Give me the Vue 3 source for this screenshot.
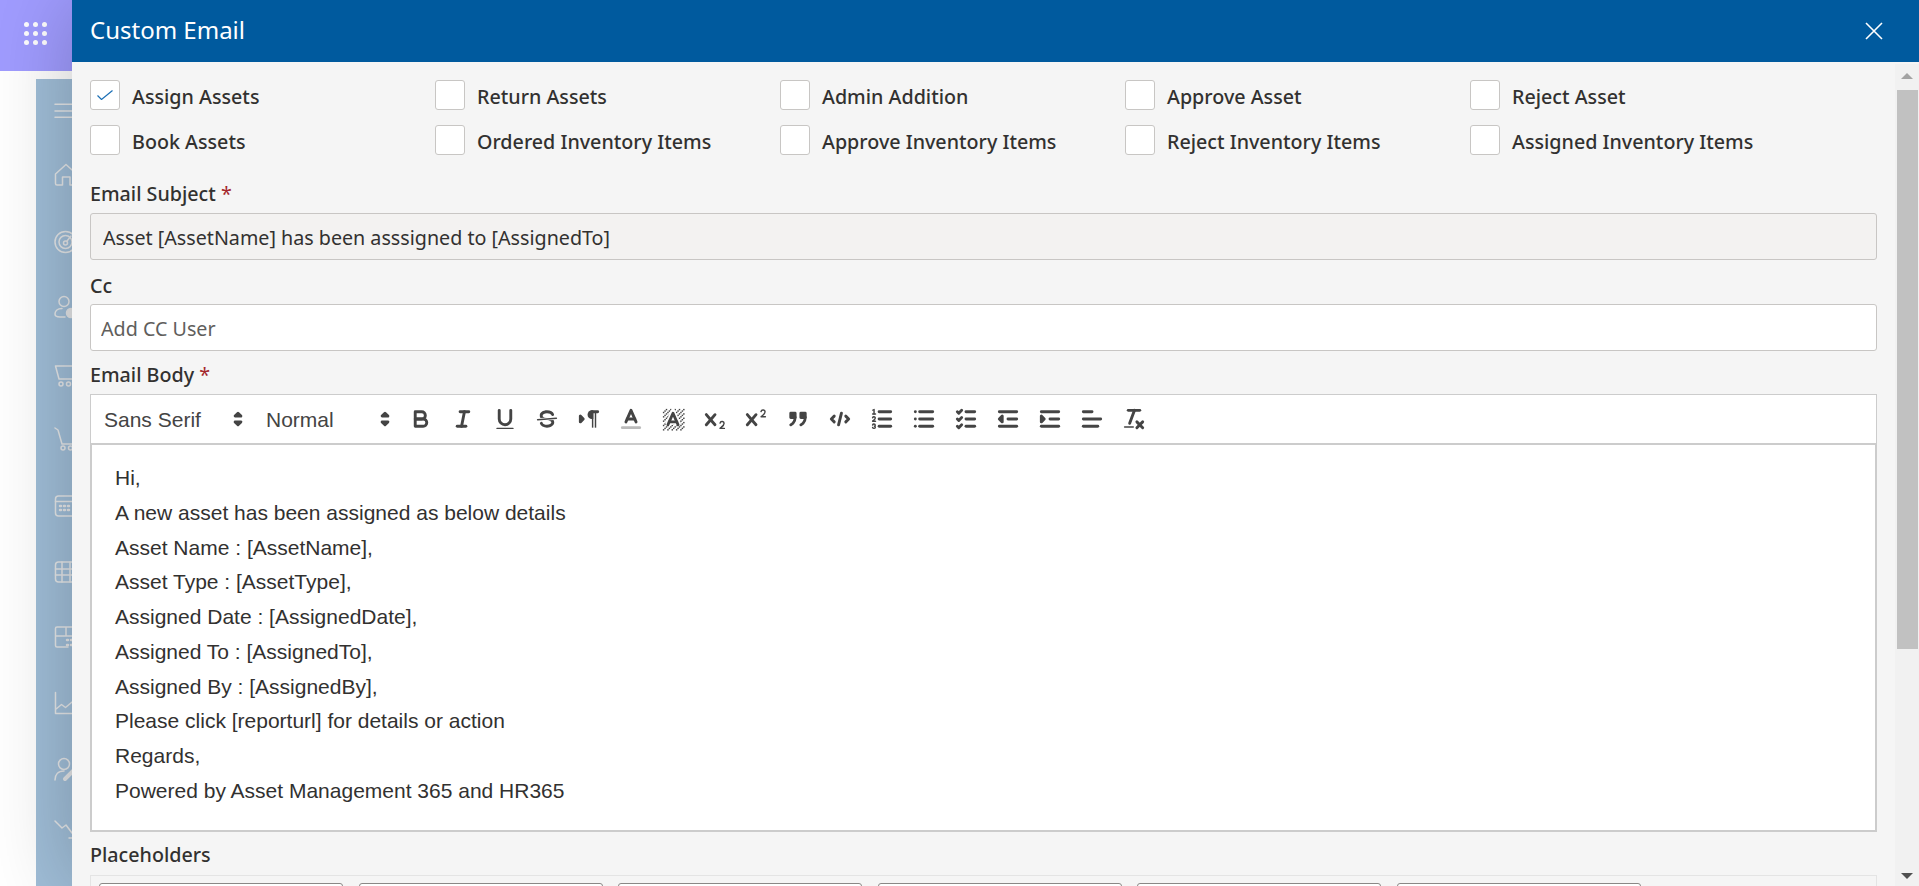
<template>
  <div class="page">
    <div class="tile">
      <div class="dots"><i v-for="n in 9" :key="n"></i></div>
    </div>
    <nav class="sidebar">
      <div class="nav-item">
        <svg viewBox="0 -1.250 24 24"><path d="M1 3h23M1 9.700h23M1 16h23" /></svg>
      </div>
      <div class="nav-item">
        <svg viewBox="0 2 24 24"><path d="M1.500 11 12 1.500 22.500 11v9.500a1.500 1.500 0 0 1-1.500 1.500h-5v-8H8.500v8H3a1.500 1.500 0 0 1-1.500-1.500Z" /></svg>
      </div>
      <div class="nav-item">
        <svg viewBox="0 1 24 24"><circle cx="11.500" cy="12" r="10.500" /><circle cx="11.500" cy="12" r="6.500" /><circle cx="11.500" cy="13" r="2" /><path d="m13 11 4-5" /></svg>
      </div>
      <div class="nav-item">
        <svg viewBox="0 1 24 24"><circle cx="10" cy="6.500" r="5" /><path d="M8 13.500c-5 0-7 3-7 5.500 0 2 2 3 5 3h5" /><circle class="nav-fill" cx="17" cy="18" r="4.500" /></svg>
      </div>
      <div class="nav-item">
        <svg viewBox="0 -2 24 24"><path d="M1.500 2h24l-3 13H5Z" /><circle cx="7" cy="20" r="2" /><circle cx="14.500" cy="20" r="2" /></svg>
      </div>
      <div class="nav-item">
        <svg viewBox="0 0 24 24"><path d="M1 1l3 2 4 14h17" /><circle cx="9" cy="21" r="2" /><circle cx="16.500" cy="21" r="2" /></svg>
      </div>
      <div class="nav-item">
        <svg viewBox="0 -1 24 24"><rect x="1.500" y="2" width="26" height="20" rx="3" /><path d="M1.500 7.500h26" /><path class="nav-dots" d="M6 12h1M10 12h1M14 12h1M6 16h1M10 16h1M14 16h1" /></svg>
      </div>
      <div class="nav-item">
        <svg viewBox="0 -2 24 24"><rect x="1.500" y="2" width="26" height="20" rx="3" /><path d="M1.500 9h26M1.500 15h26M8 2v20M16 2v20" /></svg>
      </div>
      <div class="nav-item">
        <svg viewBox="0 -1 24 24"><path d="M14 22H3a1.500 1.500 0 0 1-1.500-1.500V3.500A1.500 1.500 0 0 1 3 2h23M1.500 11H20M12 2v9" /><path class="nav-dots" d="M13 15h1M17 15h1M13 20h1M17 20h1" /></svg>
      </div>
      <div class="nav-item">
        <svg viewBox="0 -2.500 24 24"><path d="M1.500 1v21H26M1.500 18l6-5 4 3 12-10" /></svg>
      </div>
      <div class="nav-item">
        <svg viewBox="0 -2 24 24"><circle cx="10" cy="7" r="5.500" /><path d="M1 23c0-5 3-9 9-9" /><path class="nav-thick" d="m11 22 12-12" /></svg>
      </div>
      <div class="nav-item">
        <svg viewBox="0 3 24 24"><path d="m1 4 7 7 4-3 6 8M15 21h10" /></svg>
      </div>
    </nav>

    <section class="panel">
      <header class="panel-head">
        <h1>Custom Email</h1>
        <svg class="close" viewBox="0 0 18 18"><path d="M1 1l16 16M17 1 1 17" /></svg>
      </header>
      <div class="panel-body">
        <div class="content">
          <div class="checks">
            <label v-for="item in checks" :key="item" class="check">
              <span class="box">
                <svg v-if="item === 'Assign Assets'" viewBox="0 0 16 10"><path d="M.5 5.500 4.500 9.500 15.500.5" /></svg>
              </span>
              <span class="check-text">{{ item }}</span>
            </label>
          </div>

          <div class="label subject-label">Email Subject <b>*</b></div>
          <input class="input readonly" readonly value="Asset [AssetName] has been asssigned to [AssignedTo]" />

          <div class="label cc-label">Cc</div>
          <input class="input cc" placeholder="Add CC User" />

          <div class="label body-label">Email Body <b>*</b></div>
          <div class="toolbar">
            <div class="picker font">
              <span>Sans Serif</span>
              <svg viewBox="0 0 18 18"><polygon class="st" points="7 11 9 13 11 11 7 11" /><polygon class="st" points="7 7 9 5 11 7 7 7" /></svg>
            </div>
            <div class="picker size">
              <span>Normal</span>
              <svg viewBox="0 0 18 18"><polygon class="st" points="7 11 9 13 11 11 7 11" /><polygon class="st" points="7 7 9 5 11 7 7 7" /></svg>
            </div>
            <button>
              <svg viewBox="0 0 18 18"><path class="st" d="M5,4H9.500A2.500,2.500,0,0,1,12,6.500v0A2.500,2.500,0,0,1,9.500,9H5A0,0,0,0,1,5,9V4A0,0,0,0,1,5,4Z" /><path class="st" d="M5,9h5.500A2.500,2.500,0,0,1,13,11.500v0A2.500,2.500,0,0,1,10.500,14H5a0,0,0,0,1,0,0V9A0,0,0,0,1,5,9Z" /></svg>
            </button>
            <button>
              <svg viewBox="0 0 18 18"><line class="st" x1="7" x2="13" y1="4" y2="4" /><line class="st" x1="5" x2="11" y1="14" y2="14" /><line class="st" x1="8" x2="10" y1="14" y2="4" /></svg>
            </button>
            <button>
              <svg viewBox="0 0 18 18"><path class="st" d="M5,3V9a4.012,4.012,0,0,0,4,4H9a4.012,4.012,0,0,0,4-4V3" /><rect class="fl" height="1" rx="0.500" width="12" x="3" y="15" /></svg>
            </button>
            <button>
              <svg viewBox="0 0 18 18"><line class="th" x1="15.500" x2="2.500" y1="8.500" y2="9.500" /><path class="fl" d="M9.007,8C6.542,7.791,6,7.519,6,6.500,6,5.792,7.283,5,9,5c1.571,0,2.765.679,2.969,1.309a1,1,0,0,0,1.900-.617C13.356,4.106,11.354,3,9,3,6.200,3,4,4.538,4,6.500a3.200,3.200,0,0,0,.5,1.843Z" /><path class="fl" d="M8.984,10C11.457,10.208,12,10.479,12,11.500c0,.708-1.283,1.500-3,1.500-1.571,0-2.765-.679-2.969-1.309a1,1,0,1,0-1.900.617C4.644,13.894,6.646,15,9,15c2.800,0,5-1.538,5-3.500a3.200,3.200,0,0,0-.5-1.843Z" /></svg>
            </button>
            <button>
              <svg viewBox="0 0 18 18"><polygon class="st fl" points="3 11 5 9 3 7 3 11" /><line class="st" x1="15" x2="11" y1="4" y2="4" /><path class="fl" d="M11,3a3,3,0,0,0,0,6h1V3H11Z" /><rect class="fl" height="11" width="1" x="11" y="4" /><rect class="fl" height="11" width="1" x="13" y="4" /></svg>
            </button>
            <button>
              <svg viewBox="0 0 18 18"><line class="st color-line" x1="3" x2="15" y1="15" y2="15" /><polyline class="st" points="5.500 11 9 3 12.500 11" /><line class="st" x1="11.630" x2="6.380" y1="9" y2="9" /></svg>
            </button>
            <button>
              <svg viewBox="0 0 18 18">
                <rect v-for="c in hatch" :key="c[0] + '-' + c[1]" class="fl" width="1" height="1" :x="c[0]" :y="c[1]" />
                <polyline class="halo" points="5.500 13 9 5 12.500 13" /><line class="halo" x1="11.630" x2="6.380" y1="11" y2="11" />
                <polyline class="st" points="5.500 13 9 5 12.500 13" /><line class="st" x1="11.630" x2="6.380" y1="11" y2="11" />
              </svg>
            </button>
            <button>
              <svg viewBox="0 0 18 18"><path class="fl" d="M15.500,15H13.861a3.858,3.858,0,0,0,1.914-2.975,1.800,1.800,0,0,0-1.600-1.751A1.921,1.921,0,0,0,12.021,11.700a0.500,0.500,0,1,0,.957.291h0a0.914,0.914,0,0,1,1.053-.725,0.810,0.810,0,0,1,.744.762c0,1.076-1.170,1.870-1.940,2.431A1.456,1.456,0,0,0,12,15.500a0.500,0.500,0,0,0,.5.5h3A0.500,0.500,0,0,0,15.500,15Z" /><path class="fl" d="M9.651,5.241a1,1,0,0,0-1.410.108L6,7.964,3.759,5.349a1,1,0,1,0-1.519,1.300L4.683,9.500,2.241,12.350a1,1,0,1,0,1.519,1.300L6,11.036,8.241,13.650a1,1,0,0,0,1.519-1.300L7.317,9.500,9.759,6.651A1,1,0,0,0,9.651,5.241Z" /></svg>
            </button>
            <button>
              <svg viewBox="0 0 18 18"><path class="fl" d="M15.500,7H13.861a4.015,4.015,0,0,0,1.914-2.975,1.800,1.800,0,0,0-1.600-1.751A1.922,1.922,0,0,0,12.021,3.700a0.500,0.500,0,1,0,.957.291,0.917,0.917,0,0,1,1.053-.725,0.810,0.810,0,0,1,.744.762c0,1.077-1.164,1.925-1.934,2.486A1.423,1.423,0,0,0,12,7.500a0.500,0.500,0,0,0,.5.5h3A0.500,0.500,0,0,0,15.500,7Z" /><path class="fl" d="M9.651,5.241a1,1,0,0,0-1.410.108L6,7.964,3.759,5.349a1,1,0,1,0-1.519,1.300L4.683,9.500,2.241,12.350a1,1,0,1,0,1.519,1.300L6,11.036,8.241,13.650a1,1,0,0,0,1.519-1.300L7.317,9.500,9.759,6.651A1,1,0,0,0,9.651,5.241Z" /></svg>
            </button>
            <button>
              <svg viewBox="0 0 18 18"><rect class="st fl" height="3" width="3" x="4" y="5" /><rect class="st fl" height="3" width="3" x="11" y="5" /><path class="st fl" d="M7,8c0,4.031-3,5-3,5" /><path class="st fl" d="M14,8c0,4.031-3,5-3,5" /></svg>
            </button>
            <button>
              <svg viewBox="0 0 18 18"><polyline class="st" points="5 7 3 9 5 11" /><polyline class="st" points="13 7 15 9 13 11" /><line class="st" x1="10" x2="8" y1="5" y2="13" /></svg>
            </button>
            <button>
              <svg viewBox="0 0 18 18"><line class="st" x1="7" x2="15" y1="4" y2="4" /><line class="st" x1="7" x2="15" y1="9" y2="9" /><line class="st" x1="7" x2="15" y1="14" y2="14" /><line class="th" x1="2.500" x2="4.500" y1="5.500" y2="5.500" /><path class="fl" d="M3.500,6A0.500,0.500,0,0,1,3,5.500V3.085l-0.276.138A0.500,0.500,0,0,1,2.053,3c-0.124-.247-0.023-0.324.224-0.447l1-.5A0.500,0.500,0,0,1,4,2.500v3A0.500,0.500,0,0,1,3.500,6Z" /><path class="th" d="M4.500,10.500h-2c0-.234,1.850-1.076,1.850-2.234A0.959,0.959,0,0,0,2.500,8.156" /><path class="th" d="M2.500,14.846a0.959,0.959,0,0,0,1.850-.109A0.700,0.700,0,0,0,3.750,14a0.688,0.688,0,0,0,.6-0.736,0.959,0.959,0,0,0-1.850-.109" /></svg>
            </button>
            <button>
              <svg viewBox="0 0 18 18"><line class="st" x1="6" x2="15" y1="4" y2="4" /><line class="st" x1="6" x2="15" y1="9" y2="9" /><line class="st" x1="6" x2="15" y1="14" y2="14" /><line class="st" x1="3" x2="3" y1="4" y2="4" /><line class="st" x1="3" x2="3" y1="9" y2="9" /><line class="st" x1="3" x2="3" y1="14" y2="14" /></svg>
            </button>
            <button>
              <svg viewBox="0 0 18 18"><line class="st" x1="9" x2="15" y1="4" y2="4" /><polyline class="st" points="3 4 4 5 6 3" /><line class="st" x1="9" x2="15" y1="14" y2="14" /><polyline class="st" points="3 14 4 15 6 13" /><line class="st" x1="9" x2="15" y1="9" y2="9" /><polyline class="st" points="3 9 4 10 6 8" /></svg>
            </button>
            <button>
              <svg viewBox="0 0 18 18"><line class="st" x1="3" x2="15" y1="14" y2="14" /><line class="st" x1="3" x2="15" y1="4" y2="4" /><line class="st" x1="9" x2="15" y1="9" y2="9" /><polyline class="st fl" points="5 7 5 11 3 9 5 7" /></svg>
            </button>
            <button>
              <svg viewBox="0 0 18 18"><line class="st" x1="3" x2="15" y1="14" y2="14" /><line class="st" x1="3" x2="15" y1="4" y2="4" /><line class="st" x1="9" x2="15" y1="9" y2="9" /><polyline class="st fl" points="3 7 3 11 5 9 3 7" /></svg>
            </button>
            <button>
              <svg viewBox="0 0 18 18"><line class="st" x1="3" x2="15" y1="9" y2="9" /><line class="st" x1="3" x2="13" y1="14" y2="14" /><line class="st" x1="3" x2="9" y1="4" y2="4" /></svg>
            </button>
            <button>
              <svg viewBox="0 0 18 18"><line class="st" x1="5" x2="13" y1="3" y2="3" /><line class="st" x1="6" x2="9.350" y1="12" y2="3" /><line class="st" x1="11" x2="15" y1="11" y2="15" /><line class="st" x1="15" x2="11" y1="11" y2="15" /><rect class="fl" height="1" rx="0.500" width="7" x="2" y="14" /></svg>
            </button>
          </div>
          <div class="editor">
            <p v-for="line in bodyLines" :key="line">{{ line }}</p>
          </div>

          <div class="label placeholders-label">Placeholders</div>
          <div class="placeholders">
            <span v-for="n in 6" :key="n" class="ph-btn"></span>
          </div>
        </div>

        <aside class="scrollbar">
          <span class="arrow up"></span>
          <span class="thumb"></span>
          <span class="arrow down"></span>
        </aside>
      </div>
    </section>
  </div>
</template>

<script setup>
const checks = [
  'Assign Assets',
  'Return Assets',
  'Admin Addition',
  'Approve Asset',
  'Reject Asset',
  'Book Assets',
  'Ordered Inventory Items',
  'Approve Inventory Items',
  'Reject Inventory Items',
  'Assigned Inventory Items'
]

const bodyLines = [
  'Hi,',
  'A new asset has been assigned as below details',
  'Asset Name : [AssetName],',
  'Asset Type : [AssetType],',
  'Assigned Date : [AssignedDate],',
  'Assigned To : [AssignedTo],',
  'Assigned By : [AssignedBy],',
  'Please click [reporturl] for details or action',
  'Regards,',
  'Powered by Asset Management 365 and HR365'
]

// the hatched background of the highlight button
const hatch = []
for (let y = 2; y < 17; y++) {
  for (let x = 2; x < 17; x++) {
    if ((x + y) % 3 === 0) hatch.push([x, y])
  }
}
</script>

<style>
html, body {
  margin: 0;
  background: #fff;
}
</style>

<style scoped>
.page {
  position: relative;
  height: 100vh;
  overflow: hidden;
  font-family: "Noto Sans", "Open Sans", sans-serif;
  color: #323130;
}

.tile {
  width: 100px;
  height: 71px;
  background: #a09cff;
  padding: 22px 0 0 24px;
  box-sizing: border-box;
}

.dots {
  display: grid;
  grid-template-columns: repeat(3, 5px);
  gap: 4px;
}

.dots i {
  width: 5px;
  height: 5px;
  border-radius: 50%;
  background: #fff;
}

.sidebar {
  margin: 8px 0 0 36px;
  width: 70px;
  height: 900px;
  background: #a0bed8;
  padding-left: 18px;
  box-sizing: border-box;
}

.nav-item {
  height: 65.500px;
  display: flex;
  align-items: center;
}

.nav-item svg {
  width: 24px;
  height: 24px;
  fill: none;
  stroke: #e4e6e8;
  stroke-width: 1.5;
  stroke-linecap: round;
  stroke-linejoin: round;
  overflow: visible;
}

.nav-item .nav-fill {
  fill: #e4e6e8;
}

.nav-item .nav-dots {
  stroke-width: 2.5;
}

.nav-item .nav-thick {
  stroke-width: 4;
}

.panel {
  position: absolute;
  top: 0;
  right: 0;
  bottom: 0;
  left: 72px;
  display: flex;
  flex-direction: column;
  background: #f5f5f5;
  box-shadow: 0 0 80px rgba(0, 0, 0, 0.24);
}

.panel-head {
  flex: none;
  height: 62px;
  background: #005a9e;
  color: #fff;
  display: flex;
  align-items: center;
  justify-content: space-between;
  padding: 0 36px 0 18px;
}

.panel-head h1 {
  margin: -3px 0 0;
  font-size: 24px;
  font-weight: 400;
}

.close {
  width: 18px;
  height: 18px;
  fill: none;
  stroke: #fff;
  stroke-width: 1.6;
}

.panel-body {
  flex: 1;
  min-height: 0;
  display: flex;
}

.content {
  flex: 1;
  min-width: 0;
  padding: 18px 18px 0;
  overflow: hidden;
}

.checks {
  display: grid;
  grid-template-columns: repeat(5, 345px);
  row-gap: 15px;
}

.check {
  display: flex;
  align-items: center;
  gap: 12px;
  height: 30px;
  font-size: 19.700px;
  font-weight: 500;
}

.check-text {
  padding-top: 2px;
}

.box {
  width: 30px;
  height: 30px;
  box-sizing: border-box;
  background: #fff;
  border: 1px solid #c8c6c4;
  border-radius: 3px;
  display: flex;
  align-items: center;
  justify-content: center;
}

.box svg {
  width: 16px;
  height: 10px;
  fill: none;
  stroke: #1b6fb5;
  stroke-width: 1.2;
}

.label {
  height: 26px;
  line-height: 28px;
  font-size: 19.700px;
  font-weight: 500;
}

.label b {
  color: #a4262c;
  font-weight: 400;
}

.subject-label {
  margin: 25px 0 7px;
}

.cc-label {
  margin: 12px 0 6px;
}

.body-label {
  margin: 10px 0 7px;
}

.placeholders-label {
  margin: 9px 0 8px;
}

.input {
  display: block;
  width: 100%;
  height: 47px;
  box-sizing: border-box;
  padding: 2px 12px 0;
  border: 1px solid #c8c6c4;
  border-radius: 3px;
  background: #fff;
  color: #323130;
  font: 400 19.700px "Noto Sans", "Open Sans", sans-serif;
  outline: none;
}

.input.cc {
  padding-left: 10px;
}

.input::placeholder {
  color: #605e5c;
  opacity: 1;
}

.input.readonly {
  background: #f3f2f1;
}

.toolbar {
  height: 51px;
  box-sizing: border-box;
  display: flex;
  align-items: center;
  background: #fff;
  border: 1px solid #ccc;
  border-bottom-width: 2px;
  padding-left: 13px;
  font-family: "Liberation Sans", Arial, sans-serif;
}

.picker {
  display: flex;
  align-items: center;
  justify-content: space-between;
  font-size: 21px;
  color: #444;
}

.picker span {
  padding-top: 2px;
}

.picker svg {
  width: 26px;
  height: 26px;
}

.picker.font {
  width: 147px;
  margin-right: 15px;
}

.picker.size {
  width: 132px;
  margin-right: 2px;
}

.toolbar button {
  flex: none;
  width: 41.950px;
  height: 30px;
  padding: 0;
  border: 0;
  background: none;
  display: flex;
  align-items: center;
  justify-content: center;
}

.toolbar button svg {
  flex: none;
  width: 26px;
  height: 26px;
}

.st {
  fill: none;
  stroke: #444;
  stroke-width: 2;
  stroke-linecap: round;
  stroke-linejoin: round;
}

.halo {
  fill: none;
  stroke: #fff;
  stroke-width: 4;
}

.th {
  fill: none;
  stroke: #444;
  stroke-width: 1;
  stroke-linecap: round;
  stroke-linejoin: round;
}

.fl {
  fill: #444;
}

.st.color-line {
  stroke: #bbb;
}

.editor {
  height: 387px;
  box-sizing: border-box;
  background: #fff;
  border: 2px solid #ccc;
  border-top: 0;
  padding: 16px 23px;
  font: 400 21px/34.750px "Liberation Sans", Arial, sans-serif;
  color: #323130;
}

.editor p {
  margin: 0;
}

.placeholders {
  display: flex;
  gap: 15.500px;
  height: 100px;
  padding: 7px 8px 8px;
  box-sizing: border-box;
  border: 1px solid #e4e4e4;
}

.ph-btn {
  width: 244px;
  height: 40px;
  box-sizing: border-box;
  background: #fff;
  border: 1px solid #8a8886;
  border-radius: 3px;
}

.scrollbar {
  flex: none;
  width: 24px;
  margin-top: 2px;
  background: #f1f1f1;
  display: flex;
  flex-direction: column;
  align-items: center;
}

.thumb {
  flex: none;
  width: 21px;
  height: 559px;
  margin: 0 0 0 1px;
  background: #c1c1c1;
}

.arrow {
  flex: none;
  width: 0;
  height: 0;
  border-left: 6px solid transparent;
  border-right: 6px solid transparent;
}

.arrow.up {
  margin: 9px 0 11px;
  border-bottom: 6px solid #a3a3a3;
}

.arrow.down {
  margin-top: 224px;
  border-top: 6px solid #505050;
}
</style>
